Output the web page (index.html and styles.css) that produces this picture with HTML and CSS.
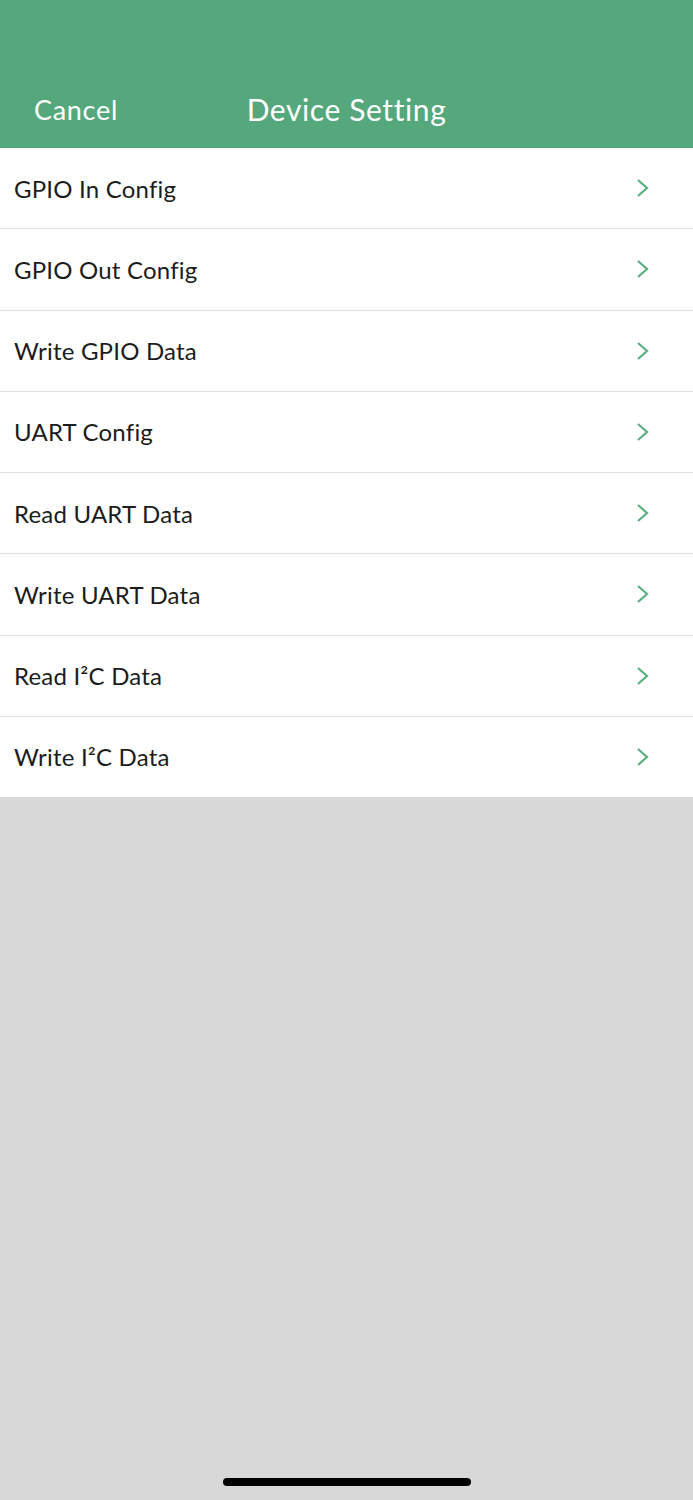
FILE: index.html
```html
<!DOCTYPE html>
<html lang="en">
<head>
  <meta charset="UTF-8" />
  <meta name="viewport" content="width=device-width, initial-scale=1.0" />
  <title>Device Setting</title>
  <link rel="stylesheet" href="styles.css">
</head>
<body>
  <div class="navbar">
    <button class="cancel-btn">Cancel</button>
    <div class="nav-title">Device Setting</div>
  </div>

  <div class="menu">
    <div class="menu-item"><span>GPIO In Config</span><svg class="chevron" viewBox="0 0 14 20"><path d="M2 2 L11 10 L2 18" /></svg></div>
    <div class="menu-item"><span>GPIO Out Config</span><svg class="chevron" viewBox="0 0 14 20"><path d="M2 2 L11 10 L2 18" /></svg></div>
    <div class="menu-item"><span>Write GPIO Data</span><svg class="chevron" viewBox="0 0 14 20"><path d="M2 2 L11 10 L2 18" /></svg></div>
    <div class="menu-item"><span>UART Config</span><svg class="chevron" viewBox="0 0 14 20"><path d="M2 2 L11 10 L2 18" /></svg></div>
    <div class="menu-item"><span>Read UART Data</span><svg class="chevron" viewBox="0 0 14 20"><path d="M2 2 L11 10 L2 18" /></svg></div>
    <div class="menu-item"><span>Write UART Data</span><svg class="chevron" viewBox="0 0 14 20"><path d="M2 2 L11 10 L2 18" /></svg></div>
    <div class="menu-item"><span>Read I²C Data</span><svg class="chevron" viewBox="0 0 14 20"><path d="M2 2 L11 10 L2 18" /></svg></div>
    <div class="menu-item"><span>Write I²C Data</span><svg class="chevron" viewBox="0 0 14 20"><path d="M2 2 L11 10 L2 18" /></svg></div>
  </div>

  <div class="home-bar"></div>
</body>
</html>
```

FILE: styles.css
```css
html, body {
  height: 100%;
}
body {
  font-family: Lato, 'Noto Sans', sans-serif;
  background-color: #d8d8d8;
  margin: 0;
  padding: 0;
  display: flex;
  flex-direction: column;
}
.navbar {
  background-color: #54a87c;
  height: 148px;
  box-sizing: border-box;
  display: flex;
  align-items: flex-end;
  padding: 0 0 22px 34px;
  position: relative;
  color: white;
}
.cancel-btn {
  background: none;
  border: none;
  color: white;
  font-family: inherit;
  font-size: 27px;
  letter-spacing: 0.7px;
  padding: 0;
  cursor: pointer;
}
.nav-title {
  position: absolute;
  left: 0;
  right: 0;
  bottom: 21px;
  text-align: center;
  font-size: 30px;
  letter-spacing: 0.6px;
  pointer-events: none;
}
.menu {
  background-color: white;
}
.menu-item {
  height: 80.25px;
  display: flex;
  align-items: center;
  justify-content: space-between;
  padding: 0 43px 0 14px;
  border-bottom: 1px solid #e0e0e0;
  font-size: 24px;
  letter-spacing: 0.2px;
  color: #1c1c1c;
}
.menu-item:last-child {
  border-bottom: none;
}
.chevron {
  width: 14px;
  height: 20px;
  fill: none;
  stroke: #5aae80;
  stroke-width: 2.2;
}
.home-bar {
  margin: auto auto 14px;
  width: 248px;
  height: 8px;
  border-radius: 4px;
  background-color: black;
}
```
